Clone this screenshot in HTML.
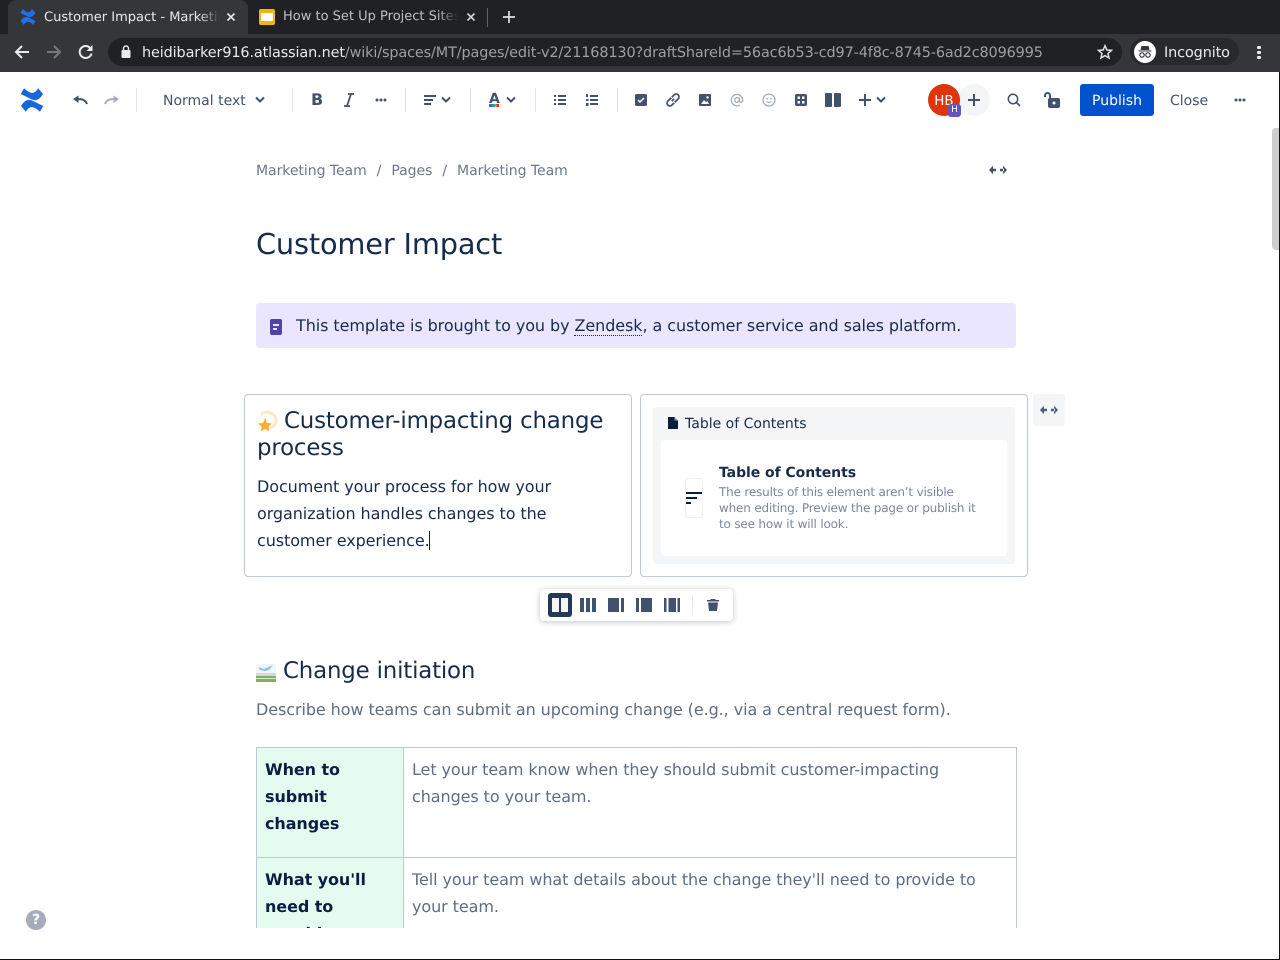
<!DOCTYPE html>
<html><head><meta charset="utf-8"><style>
html,body{margin:0;padding:0;width:1280px;height:960px;overflow:hidden;background:#fff}
body{font-family:"DejaVu Sans",sans-serif;position:relative;color:#172b4d;text-rendering:geometricPrecision}
.a{position:absolute;white-space:nowrap}
.t{letter-spacing:-.08px}
svg{position:absolute;overflow:visible}
.sep{position:absolute;width:1px;height:24px;top:88px;background:#dfe1e6}
</style></head><body>
<!-- Chrome -->
<div class="a" style="left:0;top:0;width:1280px;height:34px;background:#202124"></div>
<div class="a" style="left:0;top:34px;width:1280px;height:38px;background:#35363a"></div>
<div class="a" style="left:8px;top:0;width:240px;height:34px;background:#35363a;border-radius:8px 8px 0 0"></div>
<svg style="left:20px;top:9px" width="16" height="16" viewBox="0 0 24 24"><path d="M1 18C4.500 12.500 8 10 14 13.500L23.300 18 20 23.800C15 19.500 10.500 16 5.800 23.800ZM23 6C19.500 11.500 16 14 10 10.500L.7 6 4 .2C9 4.500 13.500 8 18.200 .2Z" fill="#1f6fec"/></svg>
<div class="a" style="left:44px;top:10px;width:176px;font-size:13px;line-height:16px;color:#e8eaed;overflow:hidden;-webkit-mask-image:linear-gradient(90deg,#000 155px,transparent 176px)">Customer Impact - Marketing Team</div>
<svg style="left:226px;top:12px" width="10" height="10"><path d="M1.500 1.500L8.500 8.500M8.500 1.500L1.500 8.500" stroke="#e8eaed" stroke-width="1.600"/></svg>
<div class="a" style="left:259px;top:9px;width:16px;height:16px;background:#f4b400;border-radius:2px"></div>
<div class="a" style="left:261px;top:13px;width:12px;height:8px;background:#fff"></div>
<div class="a" style="left:283px;top:9px;width:175px;font-size:13px;line-height:16px;color:#bdc1c6;overflow:hidden;-webkit-mask-image:linear-gradient(90deg,#000 155px,transparent 175px)">How to Set Up Project Sites in Confluence</div>
<svg style="left:466px;top:12px" width="10" height="10"><path d="M1.500 1.500L8.500 8.500M8.500 1.500L1.500 8.500" stroke="#d0d3d7" stroke-width="1.600"/></svg>
<div class="a" style="left:487px;top:8px;width:1px;height:19px;background:#5f6368"></div>
<svg style="left:502px;top:10px" width="14" height="14"><path d="M7 1V13M1 7H13" stroke="#dee1e6" stroke-width="1.700"/></svg>
<svg style="left:14px;top:44px" width="16" height="16" viewBox="0 0 16 16"><path d="M15 8H2M8 2L2 8L8 14" fill="none" stroke="#e8eaed" stroke-width="2"/></svg>
<svg style="left:46px;top:44px" width="16" height="16" viewBox="0 0 16 16"><path d="M1 8H14M8 2L14 8L8 14" fill="none" stroke="#77797c" stroke-width="2"/></svg>
<svg style="left:78px;top:44px" width="16" height="16" viewBox="0 0 16 16"><path d="M13.500 9.500A6 6 0 1 1 12 3.800" fill="none" stroke="#e8eaed" stroke-width="2"/><path d="M14.500 1V7H8.500Z" fill="#e8eaed"/></svg>
<div class="a" style="left:108px;top:38px;width:1014px;height:28px;background:#202124;border-radius:14px"></div>
<svg style="left:120px;top:45px" width="12" height="14" viewBox="0 0 12 14"><rect x="1.500" y="5" width="9" height="8" rx="1" fill="#e8eaed"/><path d="M3.500 5V3.500A2.500 2.500 0 0 1 8.500 3.500V5" fill="none" stroke="#e8eaed" stroke-width="1.400"/></svg>
<div class="a" style="left:142px;top:44px;font-size:14.400px;line-height:18px;letter-spacing:-.112px;color:#e8eaed">heidibarker916.atlassian.net<span style="color:#9aa0a6">/wiki/spaces/MT/pages/edit-v2/21168130?draftShareId=56ac6b53-cd97-4f8c-8745-6ad2c8096995</span></div>
<svg style="left:1097px;top:44px" width="16" height="16" viewBox="0 0 16 16"><path d="M8 1.700L9.900 6 14.500 6.400 11 9.500 12 14 8 11.600 4 14 5 9.500 1.500 6.400 6.100 6Z" fill="none" stroke="#dfe1e5" stroke-width="1.500"/></svg>
<div class="a" style="left:1130px;top:38px;width:109px;height:27px;background:#28292c;border-radius:14px"></div>
<div class="a" style="left:1134px;top:41px;width:22px;height:22px;background:#fff;border-radius:50%"></div>
<svg style="left:1136px;top:43px" width="18" height="18" viewBox="0 0 18 18"><path d="M5.500 3H12.500L13.500 7H4.500ZM2.500 7.500H15.500V8.500H2.500Z" fill="#35363a"/><circle cx="6" cy="12" r="2.200" fill="none" stroke="#35363a" stroke-width="1.200"/><circle cx="12" cy="12" r="2.200" fill="none" stroke="#35363a" stroke-width="1.200"/></svg>
<div class="a" style="left:1164px;top:44px;font-size:14.400px;line-height:18px;letter-spacing:-.1px;color:#e8eaed">Incognito</div>
<div class="a" style="left:1257px;top:46px;width:4px;height:3px;background:#e8eaed;border-radius:1px;box-shadow:0 5px 0 #e8eaed,0 10px 0 #e8eaed"></div>

<!-- Toolbar -->
<svg style="left:20px;top:88px" width="24" height="24" viewBox="0 0 24 24"><path d="M1 18C4.500 12.500 8 10 14 13.500L23.300 18 20 23.800C15 19.500 10.500 16 5.800 23.800ZM23 6C19.500 11.500 16 14 10 10.500L.7 6 4 .2C9 4.500 13.500 8 18.200 .2Z" fill="#1868db"/></svg>
<svg style="left:72px;top:92px" width="16" height="16" viewBox="0 0 16 16"><path d="M15 12C13.500 8 9 6 3.500 7.800" fill="none" stroke="#42526e" stroke-width="2"/><path d="M1 7L6.500 3.500 6.500 11Z" fill="#42526e"/></svg>
<svg style="left:104px;top:92px" width="16" height="16" viewBox="0 0 16 16"><path d="M1 12C2.500 8 7 6 12.500 7.800" fill="none" stroke="#a5adba" stroke-width="2"/><path d="M15 7L9.500 3.500 9.500 11Z" fill="#a5adba"/></svg>
<div class="sep" style="left:136px"></div>
<div class="a" style="left:163px;top:92px;font-size:14px;line-height:18px;color:#42526e">Normal text</div>
<svg style="left:255px;top:96px" width="10" height="8"><path d="M1 1.500L5 5.500L9 1.500" fill="none" stroke="#42526e" stroke-width="2"/></svg>
<div class="sep" style="left:292px"></div>
<div class="a" style="left:311px;top:90px;font-size:16px;line-height:20px;font-weight:bold;color:#42526e">B</div>
<svg style="left:343px;top:93px" width="12" height="14"><path d="M5 1H11M1 13H7M8 1L4 13" fill="none" stroke="#42526e" stroke-width="1.800"/></svg>
<svg style="left:375px;top:98px" width="12" height="4"><circle cx="2" cy="2" r="1.500" fill="#42526e"/><circle cx="6" cy="2" r="1.500" fill="#42526e"/><circle cx="10" cy="2" r="1.500" fill="#42526e"/></svg>
<div class="sep" style="left:405px"></div>
<svg style="left:424px;top:95px" width="12" height="10"><path d="M0 0H12V2H0ZM0 4H9V6H0ZM0 8H7V10H0Z" fill="#42526e"/></svg>
<svg style="left:441px;top:96px" width="10" height="8"><path d="M1 1.500L5 5.500L9 1.500" fill="none" stroke="#42526e" stroke-width="2"/></svg>
<div class="sep" style="left:470px"></div>
<div class="a" style="left:489px;top:90px;font-size:14px;line-height:18px;font-weight:bold;color:#42526e">A</div>
<div class="a" style="left:489px;top:104px;width:10px;height:3px;background:linear-gradient(90deg,#6554c0 0 25%,#00a3bf 25% 50%,#36b37e 50% 60%,#ff8b00 60% 75%,#de350b 75%)"></div>
<svg style="left:506px;top:96px" width="10" height="8"><path d="M1 1.500L5 5.500L9 1.500" fill="none" stroke="#42526e" stroke-width="2"/></svg>
<div class="sep" style="left:535px"></div>
<svg style="left:554px;top:94px" width="12" height="12"><path d="M0 1H2V3H0ZM4 1H12V3H4ZM0 5H2V7H0ZM4 5H12V7H4ZM0 9H2V11H0ZM4 9H12V11H4Z" fill="#42526e"/></svg>
<svg style="left:586px;top:94px" width="12" height="12"><path d="M0 0H2V3H0ZM4 1H12V3H4ZM0 5H2.500V7H0ZM4 5H12V7H4ZM0 9H2.500V12H0ZM4 9H12V11H4Z" fill="#42526e"/></svg>
<div class="sep" style="left:617px"></div>
<svg style="left:635px;top:94px" width="12" height="12"><rect width="12" height="12" rx="1.500" fill="#42526e"/><path d="M3 6L5 8L9 4" fill="none" stroke="#fff" stroke-width="1.500"/></svg>
<svg style="left:665px;top:92px" width="16" height="16" viewBox="0 0 14 14"><path d="M6 8L8 6M5.500 5L2.500 8A2.300 2.300 0 0 0 6 11.500L8 9.500M8.500 9L11.500 6A2.300 2.300 0 0 0 8 2.500L6 4.500" fill="none" stroke="#42526e" stroke-width="1.500"/></svg>
<svg style="left:699px;top:94px" width="12" height="12"><rect width="12" height="12" rx="1" fill="#42526e"/><circle cx="8.500" cy="3.500" r="1.200" fill="#fff"/><path d="M2 10L5 6 7 8 8.500 7 10 10Z" fill="#fff"/></svg>
<svg style="left:730px;top:93px" width="14" height="14" viewBox="0 0 14 14"><circle cx="7" cy="7" r="2.300" fill="none" stroke="#a5adba" stroke-width="1.300"/><path d="M9.300 4.700V8C9.300 9.800 12.700 9.800 12.700 7A5.700 5.700 0 1 0 10 12" fill="none" stroke="#a5adba" stroke-width="1.300"/></svg>
<svg style="left:762px;top:93px" width="14" height="14" viewBox="0 0 14 14"><circle cx="7" cy="7" r="6" fill="none" stroke="#a5adba" stroke-width="1.300"/><circle cx="5" cy="5.700" r=".9" fill="#a5adba"/><circle cx="9" cy="5.700" r=".9" fill="#a5adba"/><path d="M4.500 8.500Q7 10.500 9.500 8.500" fill="none" stroke="#a5adba" stroke-width="1.100"/></svg>
<svg style="left:795px;top:94px" width="12" height="12"><rect width="12" height="12" rx="2" fill="#42526e"/><path d="M2.500 2.500H5V5H2.500ZM7 2.500H9.500V5H7ZM2.500 7H5V9.500H2.500ZM7 7H9.500V9.500H7Z" fill="#fff"/></svg>
<svg style="left:825px;top:93px" width="16" height="14"><rect width="7" height="14" rx="1" fill="#42526e"/><rect x="9" width="7" height="14" rx="1" fill="#42526e"/></svg>
<svg style="left:859px;top:94px" width="12" height="12"><path d="M6 0V12M0 6H12" stroke="#42526e" stroke-width="2"/></svg>
<svg style="left:876px;top:96px" width="10" height="8"><path d="M1 1.500L5 5.500L9 1.500" fill="none" stroke="#42526e" stroke-width="2"/></svg>
<div class="a" style="left:958px;top:84px;width:32px;height:32px;background:#f4f5f7;border-radius:50%"></div>
<svg style="left:968px;top:94px" width="12" height="12"><path d="M6 0V12M0 6H12" stroke="#42526e" stroke-width="2"/></svg>
<div class="a" style="left:928px;top:84px;width:32px;height:32px;background:#de350b;border-radius:50%;color:#fff;font-size:13.500px;line-height:34px;text-align:center">HB</div>
<div class="a" style="left:948px;top:104px;width:13px;height:13px;background:#6554c0;border-radius:3px;color:#fff;font-size:9px;line-height:13px;text-align:center">H</div>
<svg style="left:1007px;top:93px" width="14" height="14" viewBox="0 0 14 14"><circle cx="6" cy="6" r="4.700" fill="none" stroke="#42526e" stroke-width="1.500"/><path d="M9.500 9.500L13 13" stroke="#42526e" stroke-width="1.700"/></svg>
<svg style="left:1044px;top:92px" width="16" height="16" viewBox="0 0 16 16"><rect x="4" y="6" width="12" height="10" rx="2" fill="#42526e"/><circle cx="10" cy="11" r="1.500" fill="#fff"/><path d="M1 5V3.500A2.500 2.500 0 0 1 6 3.500V7" fill="none" stroke="#42526e" stroke-width="2"/></svg>
<div class="a" style="left:1080px;top:84px;width:74px;height:32px;background:#0052cc;border-radius:3px;color:#fff;font-size:14px;line-height:34px;text-align:center">Publish</div>
<div class="a" style="left:1170px;top:92px;font-size:14px;line-height:18px;color:#42526e">Close</div>
<svg style="left:1234px;top:98px" width="12" height="4"><circle cx="2" cy="2" r="1.500" fill="#42526e"/><circle cx="6" cy="2" r="1.500" fill="#42526e"/><circle cx="10" cy="2" r="1.500" fill="#42526e"/></svg>

<!-- Content -->
<div class="a" style="left:256px;top:162px;font-size:14px;line-height:18px;letter-spacing:-.04px;color:#6b778c">Marketing Team<span style="margin:0 10px">/</span>Pages<span style="margin:0 10px">/</span>Marketing Team</div>
<svg style="left:989px;top:165px" width="18" height="10"><path d="M0 5L4 .8V9.200ZM18 5L14 .8V9.200ZM3 3.800H7V6.200H3ZM11 3.800H15V6.200H11Z" fill="#42526e"/></svg>
<div class="a" style="left:256px;top:226px;font-size:28.800px;line-height:36px;letter-spacing:-.17px;color:#172b4d">Customer Impact</div>
<div class="a" style="left:256px;top:303px;width:760px;height:45px;background:#eae6ff;border-radius:3px"></div>
<svg style="left:270px;top:319px" width="12" height="16"><rect width="12" height="16" rx="2" fill="#5243aa"/><path d="M3 5H9V7H3ZM3 9H7V11H3Z" fill="#eae6ff"/></svg>
<div class="a t" style="left:296px;top:314px;font-size:16px;line-height:24px;color:#172b4d">This template is brought to you by <span style="border-bottom:1px dotted #172b4d">Zendesk</span>, a customer service and sales platform.</div>

<div class="a" style="left:244px;top:394px;width:386px;height:181px;border:1px solid #c1c7d0;border-radius:4px"></div>
<div class="a" style="left:640px;top:394px;width:386px;height:181px;border:1px solid #c1c7d0;border-radius:4px"></div>
<svg style="left:257px;top:411px" width="21" height="21" viewBox="0 0 21 21"><path d="M4 3.500A9 9 0 0 1 19 9.500C19 14 15 17 10 17.500" fill="none" stroke="#fde9c4" stroke-width="3"/><path d="M8 7L10 12 15 12.500 11.300 15.800 12.300 20.500 8 18 3.700 20.500 4.700 15.800 1 12.500 6 12Z" fill="#ffac33"/></svg>
<div class="a" style="left:257px;top:408px;width:360px;white-space:normal;font-size:22.860px;line-height:27px;letter-spacing:-.16px;color:#172b4d;text-indent:27px">Customer-impacting change process</div>
<div class="a t" style="left:257px;top:473px;font-size:16px;line-height:27px;color:#172b4d">Document your process for how your<br>organization handles changes to the<br>customer experience.</div>
<div class="a" style="left:429px;top:531px;width:1px;height:19px;background:#091e42"></div>

<div class="a" style="left:653px;top:407px;width:362px;height:157px;background:#f4f5f7;border-radius:3px"></div>
<svg style="left:668px;top:417px" width="10" height="12"><path d="M0 0H6.500L10 3.500V12H0Z" fill="#091e42"/><path d="M6.500 0V3.500H10" fill="#f4f5f7" opacity=".6"/></svg>
<div class="a" style="left:685px;top:415px;font-size:14px;line-height:18px;color:#172b4d">Table of Contents</div>
<div class="a" style="left:661px;top:440px;width:346px;height:116px;background:#fff;border-radius:3px"></div>
<div class="a" style="left:685px;top:478px;width:16px;height:38px;border:1px solid #f0f1f3;border-radius:3px"></div>
<svg style="left:686px;top:492px" width="16" height="12"><path d="M0 0H16V2H0ZM0 5H11V7H0ZM0 10H5V12H0Z" fill="#091e42"/></svg>
<div class="a" style="left:719px;top:464px;font-size:14px;line-height:18px;letter-spacing:-.06px;font-weight:bold;color:#172b4d">Table of Contents</div>
<div class="a" style="left:719px;top:484px;font-size:12px;line-height:16px;letter-spacing:-.18px;color:#7a869a">The results of this element aren’t visible<br>when editing. Preview the page or publish it<br>to see how it will look.</div>
<div class="a" style="left:1033px;top:394px;width:32px;height:32px;background:#f4f5f7;border-radius:3px"></div>
<svg style="left:1040px;top:405px" width="18" height="10"><path d="M0 5L4 .8V9.200ZM18 5L14 .8V9.200ZM3 3.800H7V6.200H3ZM11 3.800H15V6.200H11Z" fill="#505f79"/></svg>

<!-- Layout toolbar -->
<div class="a" style="left:540px;top:589px;width:193px;height:32px;background:#fff;border-radius:4px;box-shadow:0 1px 6px rgba(9,30,66,.28)"></div>
<div class="a" style="left:548px;top:593px;width:24px;height:24px;background:#253858;border-radius:3px"></div>
<svg style="left:552px;top:598px" width="16" height="14"><rect width="7" height="14" fill="#f4f5f7"/><rect x="9" width="7" height="14" fill="#f4f5f7"/></svg>
<svg style="left:580px;top:598px" width="16" height="14"><path d="M0 0H4V14H0ZM6 0H10V14H6ZM12 0H16V14H12Z" fill="#42526e"/></svg>
<svg style="left:608px;top:598px" width="16" height="14"><path d="M0 0H11V14H0ZM13 0H16V14H13Z" fill="#42526e"/></svg>
<svg style="left:636px;top:598px" width="16" height="14"><path d="M0 0H3V14H0ZM5 0H16V14H5Z" fill="#42526e"/></svg>
<svg style="left:664px;top:598px" width="16" height="14"><path d="M0 0H2.500V14H0ZM4.500 0H12V14H4.500ZM13.500 0H16V14H13.500Z" fill="#42526e"/></svg>
<div class="a" style="left:692px;top:596px;width:1px;height:18px;background:#ebecf0"></div>
<svg style="left:707px;top:599px" width="12" height="12"><path d="M4 0H8L9 1H12V2.500H0V1H3ZM1 3.500H11L10 12H2Z" fill="#42526e"/></svg>

<svg style="left:256px;top:664px" width="20" height="18" viewBox="0 0 20 18"><rect width="20" height="9" fill="#f1f6fa"/><path d="M2 3L8 5 17 1 13 6 9 7 4 6Z" fill="#8dc0e6"/><rect y="9" width="20" height="3" fill="#cfdcd8"/><rect y="12" width="20" height="6" fill="#87ab68"/><rect y="14" width="20" height="1" fill="#dde8cd"/></svg>
<div class="a" style="left:283px;top:657px;font-size:22.860px;line-height:28px;letter-spacing:-.17px;color:#172b4d">Change initiation</div>
<div class="a t" style="left:256px;top:698px;font-size:16px;line-height:24px;color:#5e6c84">Describe how teams can submit an upcoming change (e.g., via a central request form).</div>

<div class="a" style="left:256px;top:747px;width:761px;height:181px;overflow:hidden">
 <div class="a" style="left:0;top:0;width:147px;height:181px;background:#e3fcef"></div>
 <div class="a" style="left:0;top:0;width:761px;height:1px;background:#c1c7d0"></div>
 <div class="a" style="left:0;top:110px;width:761px;height:1px;background:#c1c7d0"></div>
 <div class="a" style="left:0;top:0;width:1px;height:181px;background:#c1c7d0"></div>
 <div class="a" style="left:147px;top:0;width:1px;height:181px;background:#c1c7d0"></div>
 <div class="a" style="left:760px;top:0;width:1px;height:181px;background:#c1c7d0"></div>
 <div class="a t" style="left:9px;top:9px;font-size:16px;line-height:27px;font-weight:bold;color:#091e42">When to<br>submit<br>changes</div>
 <div class="a t" style="left:9px;top:119px;font-size:16px;line-height:27px;font-weight:bold;color:#091e42">What you'll<br>need to<br>provide</div>
 <div class="a t" style="left:156px;top:9px;font-size:16px;line-height:27px;color:#5e6c84">Let your team know when they should submit customer-impacting<br>changes to your team.</div>
 <div class="a t" style="left:156px;top:119px;font-size:16px;line-height:27px;color:#5e6c84">Tell your team what details about the change they'll need to provide to<br>your team.</div>
</div>

<div class="a" style="left:26px;top:910px;width:20px;height:20px;background:#a5adba;border-radius:50%;color:#fff;font-size:14px;font-weight:bold;line-height:20px;text-align:center">?</div>
<div class="a" style="left:1272px;top:128px;width:7px;height:122px;background:#cdcdcd;border-radius:4px 0 0 4px"></div>
<div class="a" style="left:1279px;top:72px;width:1px;height:888px;background:#111"></div>
<div class="a" style="left:0;top:959px;width:1280px;height:1px;background:#111"></div>
</body></html>
